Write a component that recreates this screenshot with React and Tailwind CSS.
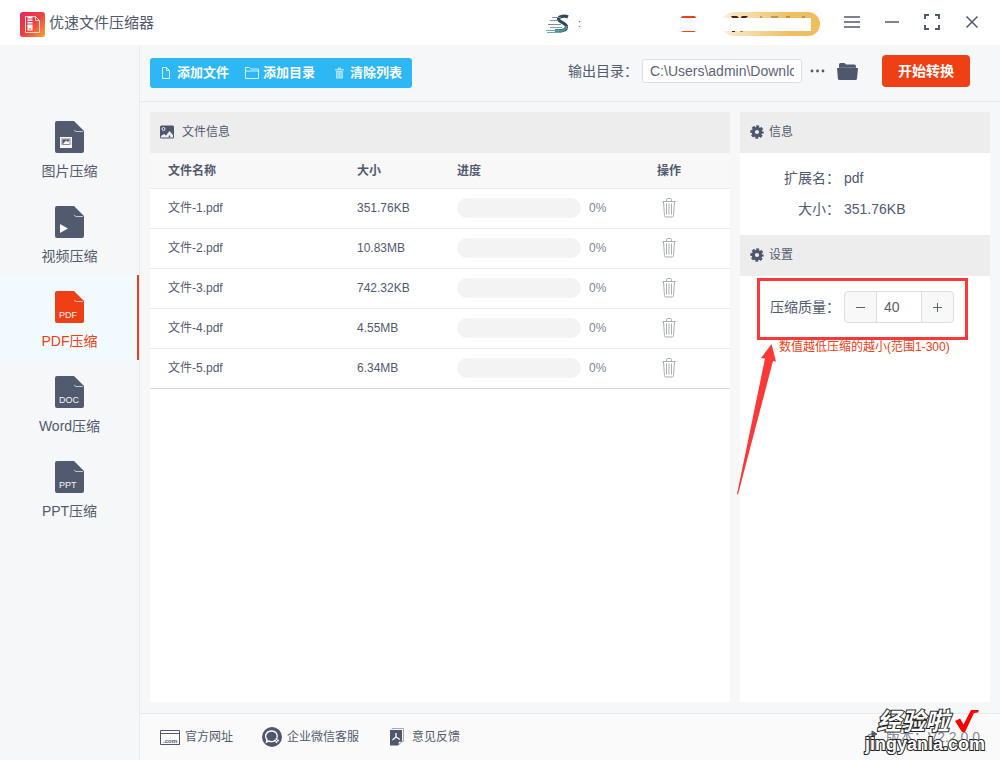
import { useState } from "react";

const initialFiles = [
  { id: 1, name: "文件-1.pdf", size: "351.76KB", progress: 0 },
  { id: 2, name: "文件-2.pdf", size: "10.83MB", progress: 0 },
  { id: 3, name: "文件-3.pdf", size: "742.32KB", progress: 0 },
  { id: 4, name: "文件-4.pdf", size: "4.55MB", progress: 0 },
  { id: 5, name: "文件-5.pdf", size: "6.34MB", progress: 0 },
];

const tabs = [
  { id: "image", label: "图片压缩" },
  { id: "video", label: "视频压缩" },
  { id: "pdf", label: "PDF压缩", tag: "PDF" },
  { id: "word", label: "Word压缩", tag: "DOC" },
  { id: "ppt", label: "PPT压缩", tag: "PPT" },
];

function AppLogo() {
  return (
    <svg width="25" height="25" viewBox="0 0 25 25" aria-hidden="true">
      <defs>
        <linearGradient id="logo" x1="0" y1="0" x2="1" y2="1">
          <stop offset="0" stopColor="#e8265c" />
          <stop offset="0.5" stopColor="#ec4141" />
          <stop offset="1" stopColor="#f8a530" />
        </linearGradient>
      </defs>
      <rect width="25" height="25" rx="3" fill="url(#logo)" />
      <path d="M5.500 4.500H15.500l4 4v12h-14z M15.500 4.500v4h4" fill="none" stroke="#ffd9d4" strokeWidth="1" />
      <path d="M10 5v9" stroke="#fff" strokeWidth="5" strokeDasharray="1.500 1" />
      <path d="M7.500 13.500h5v5h-5z M9 16.500h2v1H9z" fill="#fff" fillRule="evenodd" />
    </svg>
  );
}

function SpeedLogo() {
  return (
    <svg width="24" height="20" viewBox="0 0 24 20" fill="none" aria-hidden="true">
      <path d="M22 3C19 1.500 13 2 12.500 5C12 8 21 9 20.500 13C20 17 13 17 9 16.500" stroke="#2f4a5a" strokeWidth="3.200" />
      <path d="M20.500 12C20 17 13 17.500 9 17" stroke="#4b8f95" strokeWidth="2.500" />
      <path d="M6 3.500h9M4 6.500h8M2 10.500h13" stroke="#7f939d" strokeWidth="1" />
      <path d="M4 13.500h12M0 16.500h13M1 18.500h15" stroke="#6fa9ad" strokeWidth="1" />
    </svg>
  );
}

function TabIcon({ tab }) {
  return (
    <svg width="29" height="32" viewBox="0 0 29 32" aria-hidden="true">
      <path d="M2 0H19L29 10V30a2 2 0 0 1-2 2H2a2 2 0 0 1-2-2V2a2 2 0 0 1 2-2z" fill="currentColor" />
      <path d="M19 9l2 1.500h7" fill="none" stroke="#f6f7f9" strokeWidth="0.700" />
      {tab.id === "image" && (
        <g>
          <path d="M5 16h12v11H5z M6.500 17.500v6.500h9v-6.500z" fill="#f6f7f9" fillRule="evenodd" />
          <path d="M7 18h8v6H7z" fill="none" stroke="#f6f7f9" strokeWidth="0.600" />
          <path d="M8 23l3-3.500 2 1.500 1.500-2v4z" fill="#f6f7f9" />
        </g>
      )}
      {tab.id === "video" && <path d="M5 18l8 4.500-8 4.500z" fill="#f6f7f9" />}
      {tab.tag && <text x="4" y="27" fontSize="9" fill="#f6f7f9">{tab.tag}</text>}
    </svg>
  );
}

function GearIcon() {
  return (
    <svg width="14" height="14" viewBox="0 0 14 14" aria-hidden="true">
      <circle cx="7" cy="7" r="3.700" fill="none" stroke="#4f576e" strokeWidth="3.200" />
      <circle cx="7" cy="7" r="5.700" fill="none" stroke="#4f576e" strokeWidth="2" strokeDasharray="2.900 1.577" strokeDashoffset="1.450" />
    </svg>
  );
}

function TrashIcon() {
  return (
    <svg width="14" height="20" viewBox="0 0 14 20" fill="none" stroke="#a9adb8" strokeWidth="1" aria-hidden="true">
      <path d="M.5 3.500h13M4.500 3V1.500q0-1 1-1h3q1 0 1 1V3M1.500 4l1 13.500q.1 1.500 1.200 1.500h6.600q1.100 0 1.200-1.500l1-13.500" />
      <path d="M4.500 5.500v11M7 5.500v11M9.500 5.500v11" />
    </svg>
  );
}

function SectionHeader({ icon, gap, children }) {
  return (
    <h2 className={`flex h-[41px] items-center bg-[#ededed] pl-2.5 pb-0.5 text-xs ${gap}`}>
      {icon}
      {children}
    </h2>
  );
}

function TitleBar() {
  return (
    <header className="flex h-[45px] shrink-0 items-center bg-white pl-5 pr-2">
      <div className="flex items-center gap-1 pt-1">
        <AppLogo />
        <h1 className="pb-0.5 text-[15px]">优速文件压缩器</h1>
      </div>

      <div className="ml-auto flex items-center pt-0.5">
        <SpeedLogo />
        <span className="ml-2 w-[103px] text-[10px]">:</span>
        <svg width="15" height="16" viewBox="0 0 15 16" aria-hidden="true">
          <path d="M0 2q0-2 2-2h11q2 0 2 2zM0 15h15l-2 1H2z" fill="#ec4115" />
        </svg>
        <svg className="ml-[26px]" width="98" height="24" viewBox="0 0 98 24" aria-hidden="true">
          <defs>
            <linearGradient id="vip">
              <stop offset="0" stopColor="#fbeeda" />
              <stop offset="0.700" stopColor="#efbe60" />
              <stop offset="1" stopColor="#f0bd5c" />
            </linearGradient>
          </defs>
          <rect width="98" height="24" rx="12" fill="url(#vip)" />
          <path d="M9 4h6l3 3h-7zM20 4h6l-3 3h-5zM10 19h3v1h-3zM18 19l4 1h-3z" fill="#4d1c12" />
          <path d="M38 5h2M49 5h7M64 5h4M80 5h3" stroke="#8b6738" strokeWidth="1" />
          <path d="M0 6h89v13H0z" fill="#fff" />
        </svg>
      </div>

      <div className="ml-3 flex pb-0.5">
        <button className="flex h-10 w-10 items-center justify-center" aria-label="菜单">
          <svg width="16" height="12" stroke="currentColor" strokeWidth="1.500"><path d="M0 1h16M0 6h16M0 11h16" /></svg>
        </button>
        <button className="flex h-10 w-10 items-center justify-center" aria-label="最小化">
          <svg width="14" height="12" stroke="currentColor" strokeWidth="1.500"><path d="M0 6h14" /></svg>
        </button>
        <button className="flex h-10 w-10 items-center justify-center" aria-label="最大化">
          <svg width="16" height="16" fill="none" stroke="currentColor" strokeWidth="2"><path d="M1 5V1h4M11 1h4v4M15 11v4h-4M5 15H1v-4" /></svg>
        </button>
        <button className="flex h-10 w-10 items-center justify-center" aria-label="关闭">
          <svg width="12" height="12" stroke="currentColor" strokeWidth="1.500"><path d="M.5 .5l11 11M11.500 .5l-11 11" /></svg>
        </button>
      </div>
    </header>
  );
}

function Toolbar({ onClear }) {
  return (
    <div className="flex h-[57px] shrink-0 items-center justify-between border-b border-[#e9eaec] pl-2.5 pr-[30px]">
      <div className="flex h-[30px] items-center rounded-[3px] bg-[#2db7f5] pl-[11px] pr-2.5 text-[13px] font-bold text-white">
        <button className="flex items-center gap-1.5">
          <svg width="10" height="12" fill="none" stroke="#d5f1fd" aria-hidden="true"><path d="M1.500 .5h4l3 3v8h-7zM5.500 .5v3h3" /></svg>
          添加文件
        </button>
        <button className="ml-4 flex items-center gap-1">
          <svg width="14" height="12" fill="none" stroke="#d5f1fd" aria-hidden="true"><path d="M.5 11.500V.5h4l1.500 1.500h7.500v9.500zM.5 4h13" /></svg>
          添加目录
        </button>
        <button className="ml-5 flex items-center gap-1.5" onClick={onClear}>
          <svg width="9" height="12" aria-hidden="true">
            <path d="M0 2h3V.5h3V2h3v1.500H0zM1 4h7v7.500H1z" fill="#abe2fb" />
            <path d="M3 5v5M6 5v5" stroke="#5cc7f7" />
          </svg>
          清除列表
        </button>
      </div>

      <div className="flex items-center pb-1">
        <label htmlFor="output" className="text-sm">输出目录：</label>
        <input
          id="output"
          className="ml-1 h-6 w-40 rounded-[3px] border border-[#dcdee2] bg-white px-[7px] text-sm text-[#5b6379]"
          defaultValue="C:\Users\admin\Downloads"
        />
        <button className="ml-2 flex h-6 items-center" aria-label="选择目录">
          <svg width="15" height="4" fill="#4f576e"><circle cx="2" cy="2" r="1.400" /><circle cx="7.500" cy="2" r="1.400" /><circle cx="13" cy="2" r="1.400" /></svg>
        </button>
        <button className="ml-3 flex h-6 items-center" aria-label="打开目录">
          <svg width="21" height="17" fill="#4f576e">
            <path d="M2 4V1.500Q2 0 3.500 0h4l1.500 1.500h8.500q1.500 0 1.500 2V5H2z" />
            <path d="M2 4.500h17" stroke="#8f95a3" strokeWidth="0.500" />
            <path d="M0 5h21l-1 10.500q-.2 1.500-1.500 1.500h-16Q1 17 .9 15.500z" />
          </svg>
        </button>
        <button className="ml-6 h-8 w-[88px] rounded bg-[#ef4015] text-sm font-bold text-white">开始转换</button>
      </div>
    </div>
  );
}

function FileTable({ files, onDelete }) {
  return (
    <section className="flex-1 bg-white">
      <SectionHeader
        gap="gap-2"
        icon={
          <svg width="14" height="14" viewBox="0 0 14 14" aria-hidden="true">
            <rect y="0.500" width="14" height="13" rx="1.500" fill="#4f576e" />
            <circle cx="3.500" cy="4" r="1.500" fill="none" stroke="#ededed" />
            <path d="M1 12.500v-1.500l3-2 2 1.500L9.500 6l3.500 4v2.500z" fill="#ededed" />
            <path d="M8 13l1.500-3 1 1.500z" fill="#4f576e" />
          </svg>
        }
      >
        文件信息
      </SectionHeader>
      <table className="w-full table-fixed text-left text-xs">
        <thead>
          <tr className="h-[35px] border-b border-[#e8eaec] bg-[#f8f8f9]">
            <th className="pl-[18px] pt-0.5 font-bold">文件名称</th>
            <th className="w-[100px] pl-2.5 pt-0.5 font-bold">大小</th>
            <th className="w-[200px] pl-2.5 pt-0.5 font-bold">进度</th>
            <th className="w-[83px] pl-2.5 pt-0.5 font-bold">操作</th>
          </tr>
        </thead>
        <tbody>
          {files.map(file => (
            <tr key={file.id} className="h-10 border-b border-[#e8eaec] last:border-[#d5d7db]">
              <td className="pl-[18px]">{file.name}</td>
              <td className="pl-2.5">{file.size}</td>
              <td className="pl-2.5">
                <div className="flex items-center gap-2 text-[#808695]">
                  <div className="h-5 w-[124px] overflow-hidden rounded-full bg-[#f3f3f3]">
                    <div className="h-full bg-[#2db7f5]" style={{ width: `${file.progress}%` }} />
                  </div>
                  {file.progress}%
                </div>
              </td>
              <td className="pl-[15px]">
                <button className="block" aria-label={`删除 ${file.name}`} onClick={() => onDelete(file.id)}>
                  <TrashIcon />
                </button>
              </td>
            </tr>
          ))}
        </tbody>
      </table>
    </section>
  );
}

function SettingsPanel() {
  const [quality, setQuality] = useState(40);
  const change = value => setQuality(Math.min(300, Math.max(1, value)));

  return (
    <aside className="w-[250px] shrink-0 bg-white">
      <SectionHeader gap="gap-[5px]" icon={<GearIcon />}>信息</SectionHeader>
      <dl className="grid h-[82px] grid-cols-[100px_1fr] content-center gap-x-1 gap-y-[11px] pb-0.5 text-sm">
        <dt className="text-right">扩展名：</dt>
        <dd>pdf</dd>
        <dt className="text-right">大小：</dt>
        <dd>351.76KB</dd>
      </dl>
      <SectionHeader gap="gap-[5px]" icon={<GearIcon />}>设置</SectionHeader>

      <div className="relative pt-[15px]">
        <div className="flex items-center gap-1">
          <label htmlFor="quality" className="w-[100px] text-right text-sm">压缩质量：</label>
          <div className="flex h-8 w-[110px] overflow-hidden rounded border border-[#dcdee2] bg-[#f8f8f9] text-[#5b6379]">
            <button className="flex w-8 items-center justify-center border-r border-[#dcdee2]" aria-label="减少" onClick={() => change(quality - 1)}>
              <svg width="9" height="9" stroke="currentColor"><path d="M0 4.500h9" /></svg>
            </button>
            <input
              id="quality"
              className="min-w-0 flex-1 bg-white px-[7px] text-sm text-[#606266]"
              value={quality}
              onChange={e => change(Number(e.target.value) || 1)}
            />
            <button className="flex w-8 items-center justify-center border-l border-[#dcdee2]" aria-label="增加" onClick={() => change(quality + 1)}>
              <svg width="9" height="9" stroke="currentColor"><path d="M0 4.500h9M4.500 0v9" /></svg>
            </button>
          </div>
        </div>
        <p className="mt-4 pl-[39px] text-xs text-[#ef4015]">数值越低压缩的越小(范围1-300)</p>

        {/* callout */}
        <div className="pointer-events-none absolute left-[17px] top-0.5 h-[62px] w-[211px] border-3 border-[#fc3838]" />
        <svg className="pointer-events-none absolute -left-1 top-[68px]" width="42" height="152" viewBox="0 0 42 152" aria-hidden="true">
          <path d="M35.500 0L25 14l4 .5L1 150l1 .5L37 17l3 .5z" fill="#fc3838" />
        </svg>
      </div>
    </aside>
  );
}

function Footer() {
  return (
    <footer className="relative flex h-[47px] shrink-0 items-center border-t border-[#e9eaec] bg-[#fafafa] px-5 text-xs">
      <a href="#site" className="flex items-center gap-[5px]">
        <svg width="20" height="15" viewBox="0 0 20 15" aria-hidden="true">
          <path d="M.5 .5h19v14H.5zM.5 3.500h19" fill="none" stroke="#4f576e" />
          <text x="3" y="12.500" fontSize="6" fontWeight="bold" fill="#4f576e">.com</text>
        </svg>
        官方网址
      </a>
      <a href="#support" className="ml-[29px] flex items-center gap-[5px]">
        <svg width="20" height="20" viewBox="0 0 20 20" aria-hidden="true">
          <circle cx="10" cy="10" r="10" fill="#4f576e" />
          <path d="M13.500 13.500Q10 15.500 6.500 14L4.500 15l.5-2.500C1.500 8 5.500 4 9.500 4c4.500 0 6.500 3.500 5.500 7" fill="none" stroke="#fff" strokeWidth="1.400" />
          <path d="M14.500 11v5M12 13.500h5" stroke="#fff" strokeWidth="1.600" strokeDasharray="2 1" />
        </svg>
        企业微信客服
      </a>
      <a href="#feedback" className="ml-[31px] flex items-center gap-2">
        <svg width="14" height="18" viewBox="0 0 14 18" aria-hidden="true">
          <path d="M2 1.500V.5h11.500v13H12" fill="none" stroke="#a4a8b3" />
          <path d="M0 2h12v11l-4 4.500H0z" fill="#4f576e" />
          <path d="M6 5v4l-3.500 3M6 9l4 2.500" fill="none" stroke="#fff" strokeWidth="1.300" />
          <path d="M8.500 17v-3.500H12z" fill="#fff" stroke="#4f576e" strokeWidth="0.500" />
        </svg>
        意见反馈
      </a>
      <p className="ml-auto flex items-center gap-2 text-sm text-[#858b9b]">
        <svg width="12" height="14" fill="none" stroke="#4f576e" aria-hidden="true"><path d="M1 8q0-4 6-4" /><path d="M6 1l5 3-5 3z" fill="#4f576e" /></svg>
        <span>版本：V2.2.0.0</span>
      </p>

      {/* watermark */}
      <div className="pointer-events-none absolute bottom-1.5 right-[15px] text-right font-bold text-white [-webkit-text-stroke:2px_#222] [paint-order:stroke_fill]">
        <div className="flex items-center justify-end gap-1.5 pr-1.5">
          <span className="text-2xl leading-6 italic">经验啦</span>
          <svg width="24" height="24" viewBox="0 0 24 24" aria-hidden="true">
            <path d="M0 11l5-2.500 3.500 6L16 0l8-.5-1 3-4 .5-9 19H7z" fill="#fe0000" />
          </svg>
        </div>
        <div className="text-lg leading-5">jingyanla.com</div>
      </div>
    </footer>
  );
}

export default function App() {
  const [files, setFiles] = useState(initialFiles);
  const [active, setActive] = useState("pdf");

  const deleteFile = id => setFiles(prev => prev.filter(f => f.id !== id));

  return (
    <div className="flex min-h-screen flex-col overflow-hidden bg-[#f6f7f9] font-['Liberation_Sans','Noto_Sans_CJK_SC',sans-serif] text-[#515a6e]">
      <TitleBar />
      <div className="flex flex-1">
        <nav className="w-[140px] shrink-0 border-r border-[#e9eaec] pt-[60px]">
          {tabs.map(tab => (
            <button
              key={tab.id}
              onClick={() => setActive(tab.id)}
              className={`flex h-[85px] w-full flex-col items-center border-r-2 pt-4 pl-0.5 text-sm ${
                active === tab.id ? "border-[#ef4015] bg-[#f0faff] text-[#ef4015]" : "border-transparent"
              }`}
            >
              <TabIcon tab={tab} />
              <span className="mt-2">{tab.label}</span>
            </button>
          ))}
        </nav>
        <div className="flex min-w-0 flex-1 flex-col">
          <Toolbar onClear={() => setFiles([])} />
          <main className="flex flex-1 gap-2.5 px-2.5 pt-2.5 pb-[11px]">
            <FileTable files={files} onDelete={deleteFile} />
            <SettingsPanel />
          </main>
          <Footer />
        </div>
      </div>
    </div>
  );
}
